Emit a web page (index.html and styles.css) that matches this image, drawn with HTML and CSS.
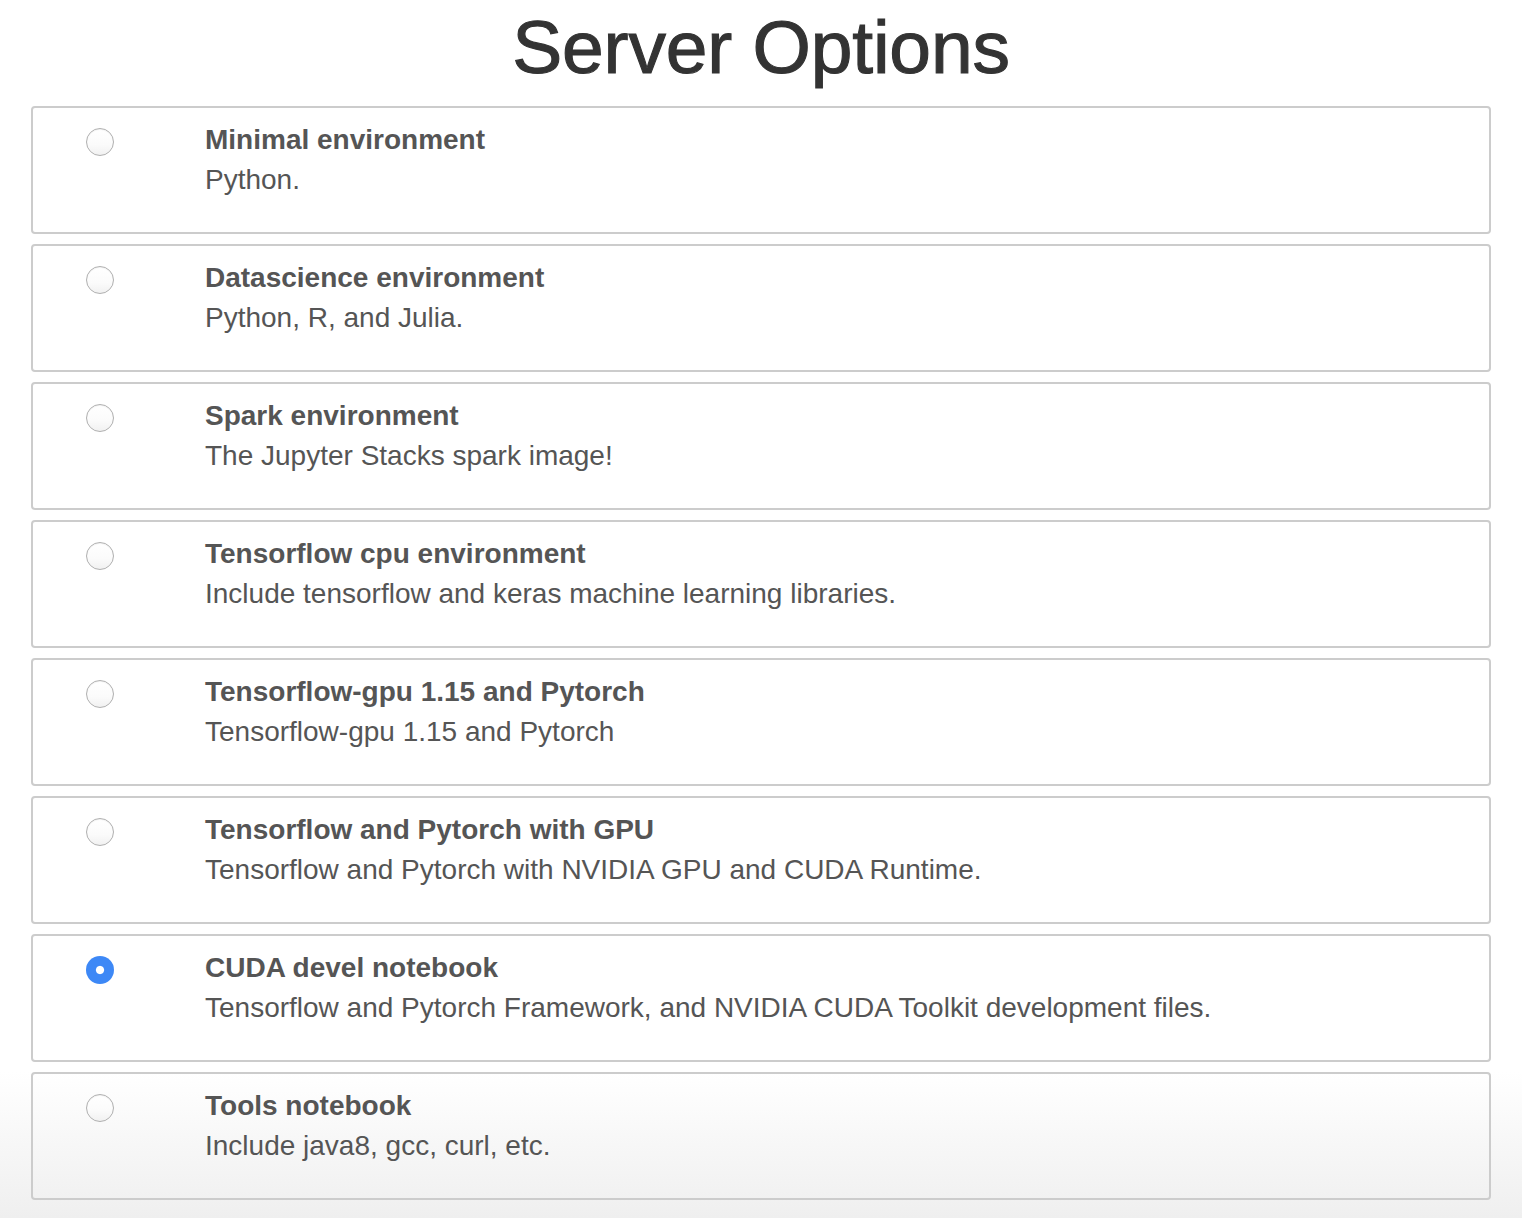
FILE: index.html
```html
<!DOCTYPE html>
<html lang="en">
<head>
<meta charset="utf-8">
<title>Server Options</title>
<link rel="stylesheet" href="styles.css">
</head>
<body>
<main class="page">
  <h1 class="page-title">Server Options</h1>
  <form class="profile-list">
    <label class="profile">
      <span class="profile-radio"><input type="radio" name="profile" value="0"></span>
      <span class="profile-text"><strong class="profile-name">Minimal environment</strong><span class="profile-desc">Python.</span></span>
    </label>
    <label class="profile">
      <span class="profile-radio"><input type="radio" name="profile" value="1"></span>
      <span class="profile-text"><strong class="profile-name">Datascience environment</strong><span class="profile-desc">Python, R, and Julia.</span></span>
    </label>
    <label class="profile">
      <span class="profile-radio"><input type="radio" name="profile" value="2"></span>
      <span class="profile-text"><strong class="profile-name">Spark environment</strong><span class="profile-desc">The Jupyter Stacks spark image!</span></span>
    </label>
    <label class="profile">
      <span class="profile-radio"><input type="radio" name="profile" value="3"></span>
      <span class="profile-text"><strong class="profile-name">Tensorflow cpu environment</strong><span class="profile-desc">Include tensorflow and keras machine learning libraries.</span></span>
    </label>
    <label class="profile">
      <span class="profile-radio"><input type="radio" name="profile" value="4"></span>
      <span class="profile-text"><strong class="profile-name">Tensorflow-gpu 1.15 and Pytorch</strong><span class="profile-desc">Tensorflow-gpu 1.15 and Pytorch</span></span>
    </label>
    <label class="profile">
      <span class="profile-radio"><input type="radio" name="profile" value="5"></span>
      <span class="profile-text"><strong class="profile-name">Tensorflow and Pytorch with GPU</strong><span class="profile-desc">Tensorflow and Pytorch with NVIDIA GPU and CUDA Runtime.</span></span>
    </label>
    <label class="profile">
      <span class="profile-radio"><input type="radio" name="profile" value="6" checked></span>
      <span class="profile-text"><strong class="profile-name">CUDA devel notebook</strong><span class="profile-desc">Tensorflow and Pytorch Framework, and NVIDIA CUDA Toolkit development files.</span></span>
    </label>
    <label class="profile">
      <span class="profile-radio"><input type="radio" name="profile" value="7"></span>
      <span class="profile-text"><strong class="profile-name">Tools notebook</strong><span class="profile-desc">Include java8, gcc, curl, etc.</span></span>
    </label>
  </form>
</main>
</body>
</html>
```

FILE: styles.css
```css
html, body {
  margin: 0;
  padding: 0;
}

body {
  min-height: 100vh;
  background: linear-gradient(to bottom, #ffffff 0%, #ffffff 88%, #efefef 100%);
  font-family: "Liberation Sans", Arial, Helvetica, sans-serif;
  color: #555;
}

.page {
  padding: 0 31px;
}

.page-title {
  margin: 6px 0 18px;
  font-size: 75px;
  line-height: 82px;
  font-weight: 400;
  color: #333;
  text-align: center;
  -webkit-text-stroke: 1.1px #333;
  letter-spacing: -0.2px;
}

.profile-list {
  display: flex;
  flex-direction: column;
  gap: 10px;
  margin: 0;
}

.profile {
  box-sizing: border-box;
  display: flex;
  height: 128px;
  padding-top: 12px;
  border: 2px solid #cccccc;
  border-radius: 4px;
  background: transparent;
  cursor: pointer;
}

.profile-radio {
  flex: 0 0 172px;
  padding-top: 8px;
  padding-left: 53px;
  box-sizing: border-box;
}

.profile-radio input {
  -webkit-appearance: none;
  appearance: none;
  display: block;
  box-sizing: border-box;
  width: 28px;
  height: 28px;
  margin: 0;
  border-radius: 50%;
  border: 1px solid #b0b0b0;
  background: linear-gradient(to bottom, #ffffff 0%, #fbfbfb 60%, #f1f1f1 100%);
  box-shadow: inset 0 1px 1px rgba(0, 0, 0, 0.05);
  cursor: pointer;
}

.profile-radio input:checked {
  border: none;
  background: radial-gradient(circle, #ffffff 0, #ffffff 3.6px, #3d88f6 4.6px, #3d88f6 100%);
  box-shadow: none;
}

.profile-text {
  display: flex;
  flex-direction: column;
  font-size: 28px;
  line-height: 40px;
}

.profile-name {
  font-weight: 700;
  color: #555;
}

.profile-desc {
  font-weight: 400;
  color: #555;
}
```
